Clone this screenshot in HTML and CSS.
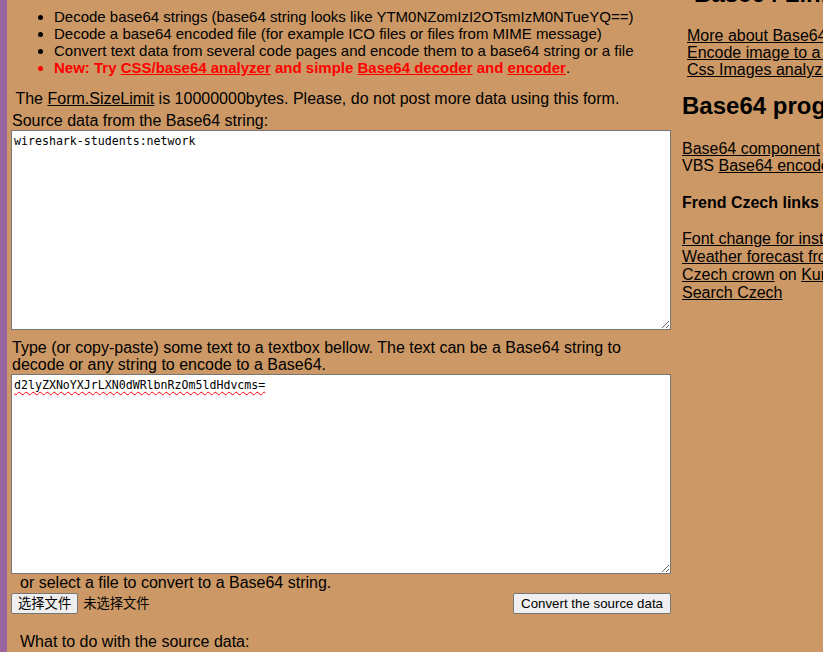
FILE: index.html
```html
<!DOCTYPE html>
<html>
<head>
<meta charset="utf-8">
<link rel="stylesheet" href="styles.css">
</head>
<body>
<div class="page">
  <div class="strip"></div>
  <div class="main">
    <ul class="features">
      <li>Decode base64 strings (base64 string looks like YTM0NZomIzI2OTsmIzM0NTueYQ==)</li>
      <li>Decode a base64 encoded file (for example ICO files or files from MIME message)</li>
      <li>Convert text data from several code pages and encode them to a base64 string or a file</li>
      <li class="new">New: Try <a href="#">CSS/base64 analyzer</a> and simple <a href="#">Base64 decoder</a> and <a href="#">encoder</a><span class="dot">.</span></li>
    </ul>
    <p class="limit">&nbsp;The <a href="#">Form.SizeLimit</a> is 10000000bytes. Please, do not post more data using this form.</p>
    <div class="label">Source data from the Base64 string:</div>
    <div class="box">wireshark-students:network</div>
    <div class="label second">Type (or copy-paste) some text to a textbox bellow. The text can be a Base64 string to decode or any string to encode to a Base64.</div>
    <div class="box"><span class="misspelled">d2lyZXNoYXJrLXN0dWRlbnRzOm5ldHdvcms=</span></div>
    <div class="filenote">or select a file to convert to a Base64 string.</div>
    <div class="buttons">
      <div class="file"><span class="btn">选择文件</span><span class="nofile">未选择文件</span></div>
      <span class="btn convert">Convert the source data</span>
    </div>
    <div class="what">What to do with the source data:</div>
  </div>
  <div class="side">
    <h2 class="cut">Base64 Links</h2>
    <div class="links">
      <a href="#">More about Base64 encoding</a><br>
      <a href="#">Encode image to a Base64 string</a><br>
      <a href="#">Css Images analyzer</a>
    </div>
    <h2 class="prog">Base64 programming</h2>
    <div class="comp">
      <a href="#">Base64 component</a> for ASP<br>
      VBS <a href="#">Base64 encode</a> and decode
    </div>
    <h3 class="czech">Frend Czech links</h3>
    <div class="czlinks">
      <a href="#">Font change for instant messages</a><br>
      <a href="#">Weather forecast from Czech</a><br>
      <a href="#">Czech crown</a> on <a href="#">Kurzy</a><br>
      <a href="#">Search Czech</a>
    </div>
  </div>
</div>
</body>
</html>
```
FILE: styles.css
```css
html, body {
  margin: 0;
  padding: 0;
  background: #cc9966;
  overflow: hidden;
}
body {
  font-family: "Liberation Sans", Arial, sans-serif;
  font-size: 16px;
  line-height: 17px;
  color: #000;
}
a { color: #000; text-decoration: underline; }
.page {
  display: flex;
  width: 1100px;
  height: 652px;
}
.strip {
  width: 7px;
  flex: none;
  background: #9966a0;
}
.main {
  width: 661px;
  flex: none;
  padding-left: 4px;
}
.features {
  margin: 8px 0 0 0;
  padding-left: 43px;
  font-size: 15px;
}
.features li { line-height: 17px; }
.new { color: #ff0000; font-weight: bold; }
.new a { color: #ff0000; }
.new .dot { color: #000; font-weight: normal; }
.limit { margin: 14px 0 0 0; line-height: 17px; }
.label { margin-top: 5px; line-height: 17px; padding-left: 1px; }
.label.second { margin-top: 9px; width: 640px; }
.box {
  box-sizing: border-box;
  width: 660px;
  height: 200px;
  margin-top: 1px;
  background: #fff;
  border: 1px solid #767676;
  padding: 2px 2px;
  font-family: "DejaVu Sans Mono", monospace;
  font-size: 11.6px;
  line-height: 16px;
  resize: both;
  overflow: hidden;
}
.misspelled {
  text-decoration: underline wavy #ff0000;
  text-decoration-thickness: 1px;
  text-underline-offset: 2px;
}
.filenote { padding-left: 9px; margin-top: 0px; line-height: 17px; }
.buttons {
  display: flex;
  justify-content: space-between;
  align-items: center;
  width: 660px;
  margin-top: 2px;
}
.file { display: flex; align-items: center; }
.btn {
  display: inline-block;
  box-sizing: border-box;
  height: 21px;
  padding: 0 6px;
  background: #efefef;
  border: 1px solid #767676;
  border-radius: 2px;
  font-family: "Liberation Sans", "Noto Sans CJK SC", sans-serif;
  font-size: 13.3px;
  line-height: 19px;
  color: #000;
}
.btn.convert { padding: 0 7px; }
.nofile {
  margin-left: 5px;
  font-family: "Liberation Sans", "Noto Sans CJK SC", sans-serif;
  font-size: 13.3px;
}
.what { padding-left: 9px; margin-top: 19px; line-height: 17px; }
.side {
  margin-left: 10px;
  white-space: nowrap;
}
.cut {
  margin: -20px 0 0 12px;
  font-size: 24px;
  line-height: 28px;
}
.links { margin: 19px 0 0 5px; line-height: 17px; }
.prog { margin: 14px 0 0 0; font-size: 24px; line-height: 28px; }
.comp { margin-top: 20px; line-height: 17px; }
.czech { margin: 20px 0 0 0; font-size: 16px; line-height: 18px; }
.czlinks { margin-top: 18px; line-height: 18px; }
```
